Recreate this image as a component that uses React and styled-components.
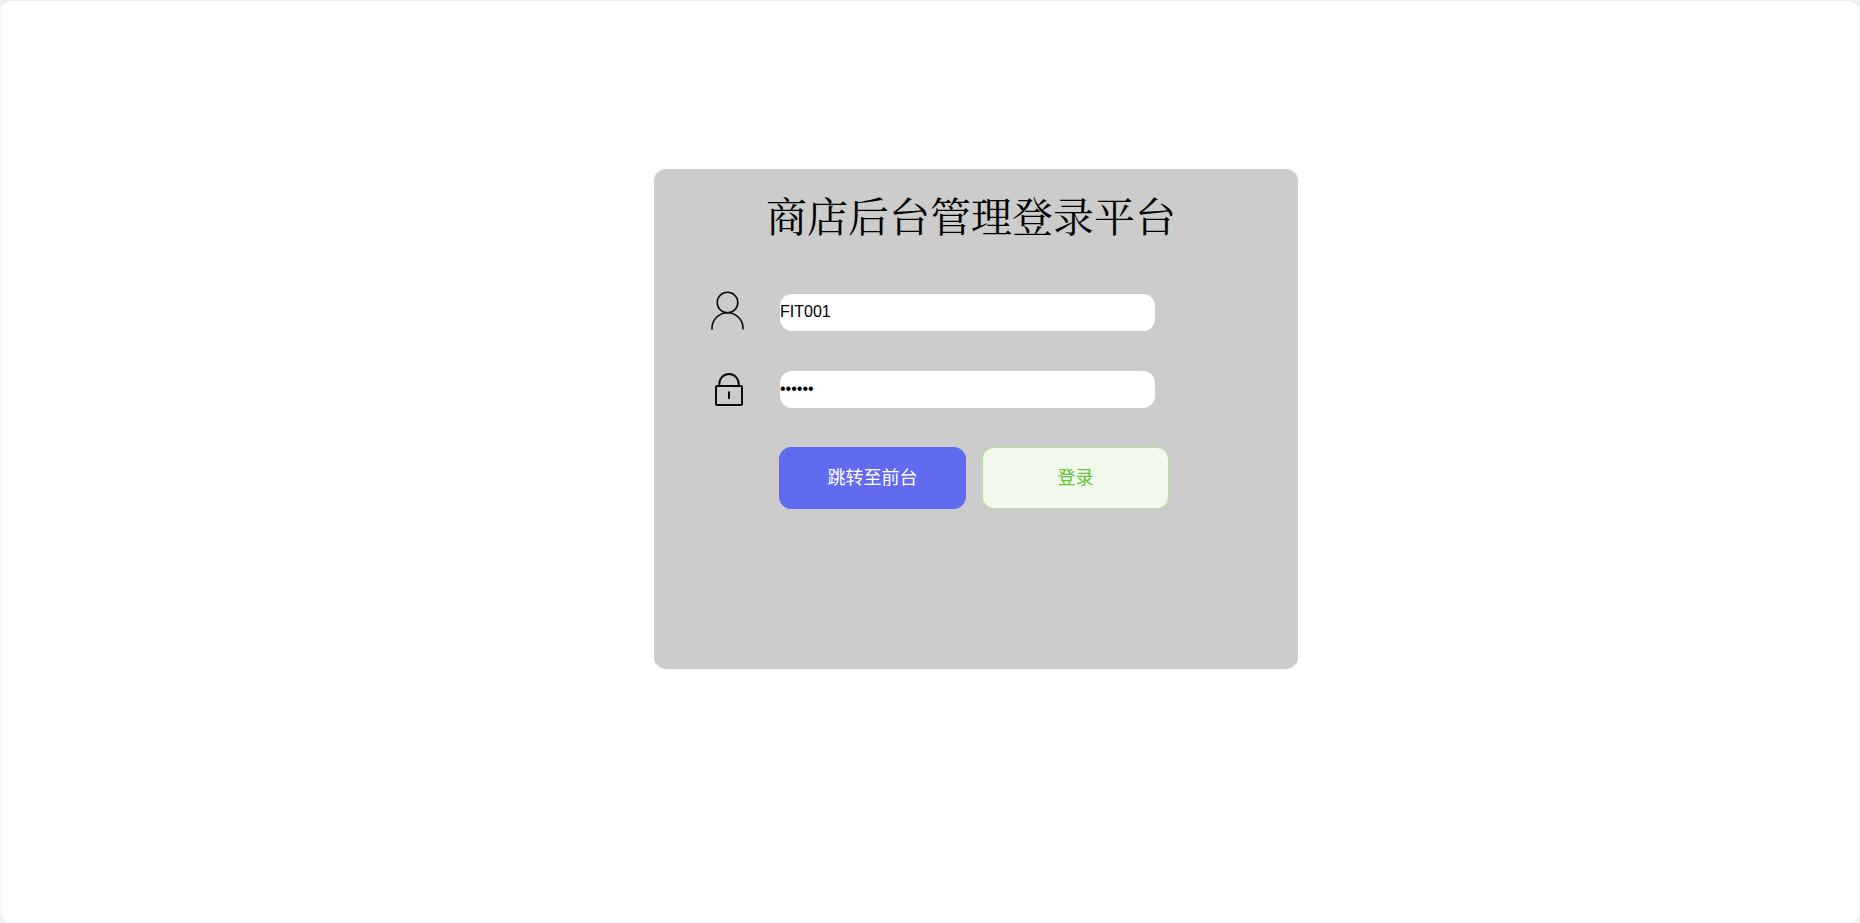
import React, { useState } from "react";
import styled, { createGlobalStyle } from "styled-components";

const GlobalStyle = createGlobalStyle`
  * {
    box-sizing: border-box;
  }

  body {
    margin: 0;
    background: #f0f0f0;
    font-family: "Liberation Sans", "Noto Sans CJK SC", sans-serif;
  }
`;

const Page = styled.main`
  min-height: 100vh;
  padding: 168px 9px 0;
  border: 1px solid #f8f8f8;
  border-top-color: #ebebeb;
  border-bottom: 0;
  border-radius: 12px;
  background: #fff;
`;

const LoginCard = styled.form`
  width: 35%;
  min-width: 560px;
  min-height: 500px;
  margin-left: 35%;
  padding: 16px 0;
  border-radius: 12px;
  background: #ccc;
`;

const Title = styled.h1`
  margin: 0 10px 49px 0;
  color: #000;
  font-family: SimSun, "Noto Serif CJK SC", "Noto Sans CJK SC", serif;
  font-size: 41px;
  font-weight: 400;
  line-height: 60px;
  text-align: center;
`;

const Fields = styled.div`
  display: grid;
  gap: 40px;
  margin-bottom: 39px;
`;

const Field = styled.div`
  display: flex;
  align-items: center;
  height: 37px;
  padding-left: 56px;
`;

const FieldLabel = styled.label`
  display: flex;
  flex: none;
  width: 70px;

  svg {
    width: 36px;
    height: 40px;
    overflow: visible;
    fill: none;
    stroke: #0a0a0a;
  }
`;

const TextInput = styled.input`
  width: 375px;
  height: 37px;
  padding: 0 0 2px;
  border: 0;
  border-radius: 12px;
  outline: none;
  background: #fff;
  color: #000;
  font-family: "Liberation Sans", Arial, sans-serif;
  font-size: 16px;
`;

const Actions = styled.div`
  display: flex;
  gap: 16px;
  padding-left: 125px;
`;

const Button = styled.button`
  width: 187px;
  height: 62px;
  padding: 0 0 4px;
  border: 1px solid ${({ $plain }) => ($plain ? "#b3e19d" : "#626aef")};
  border-radius: 12px;
  background: ${({ $plain }) => ($plain ? "#f0f9eb" : "#626aef")};
  color: ${({ $plain }) => ($plain ? "#67c23a" : "#fff")};
  font-family: "Microsoft YaHei", "Noto Sans CJK SC", sans-serif;
  font-size: 18px;
  cursor: pointer;
`;

const UserIcon = () => (
  <svg viewBox="0 0 36 40" strokeWidth="1.6" aria-hidden="true">
    <circle cx="17.5" cy="9.5" r="10.3" />
    <path d="M2 36.5v-1.5a15.5 15.2 0 0 1 31 0v1.5" />
  </svg>
);

const LockIcon = () => (
  <svg viewBox="0 0 36 40" strokeWidth="2" strokeLinejoin="round" aria-hidden="true">
    <rect x="6" y="16" width="26" height="19" rx="1" />
    <path d="M9.3 16v-2.3a9.7 9.7 0 0 1 19.4 0v2.3" />
    <path d="M19 21.5v7.5" />
  </svg>
);

const App = () => {
  const [account, setAccount] = useState("FIT001");
  const [password, setPassword] = useState("123456");

  return (
    <>
      <GlobalStyle />
      <Page>
        <LoginCard onSubmit={(e) => e.preventDefault()}>
          <Title>商店后台管理登录平台</Title>
          <Fields>
            <Field>
              <FieldLabel htmlFor="account" aria-label="账号">
                <UserIcon />
              </FieldLabel>
              <TextInput
                id="account"
                type="text"
                value={account}
                onChange={(e) => setAccount(e.target.value)}
              />
            </Field>
            <Field>
              <FieldLabel htmlFor="password" aria-label="密码">
                <LockIcon />
              </FieldLabel>
              <TextInput
                id="password"
                type="password"
                value={password}
                onChange={(e) => setPassword(e.target.value)}
              />
            </Field>
          </Fields>
          <Actions>
            <Button type="button">跳转至前台</Button>
            <Button type="submit" $plain>登录</Button>
          </Actions>
        </LoginCard>
      </Page>
    </>
  );
};

export default App;
